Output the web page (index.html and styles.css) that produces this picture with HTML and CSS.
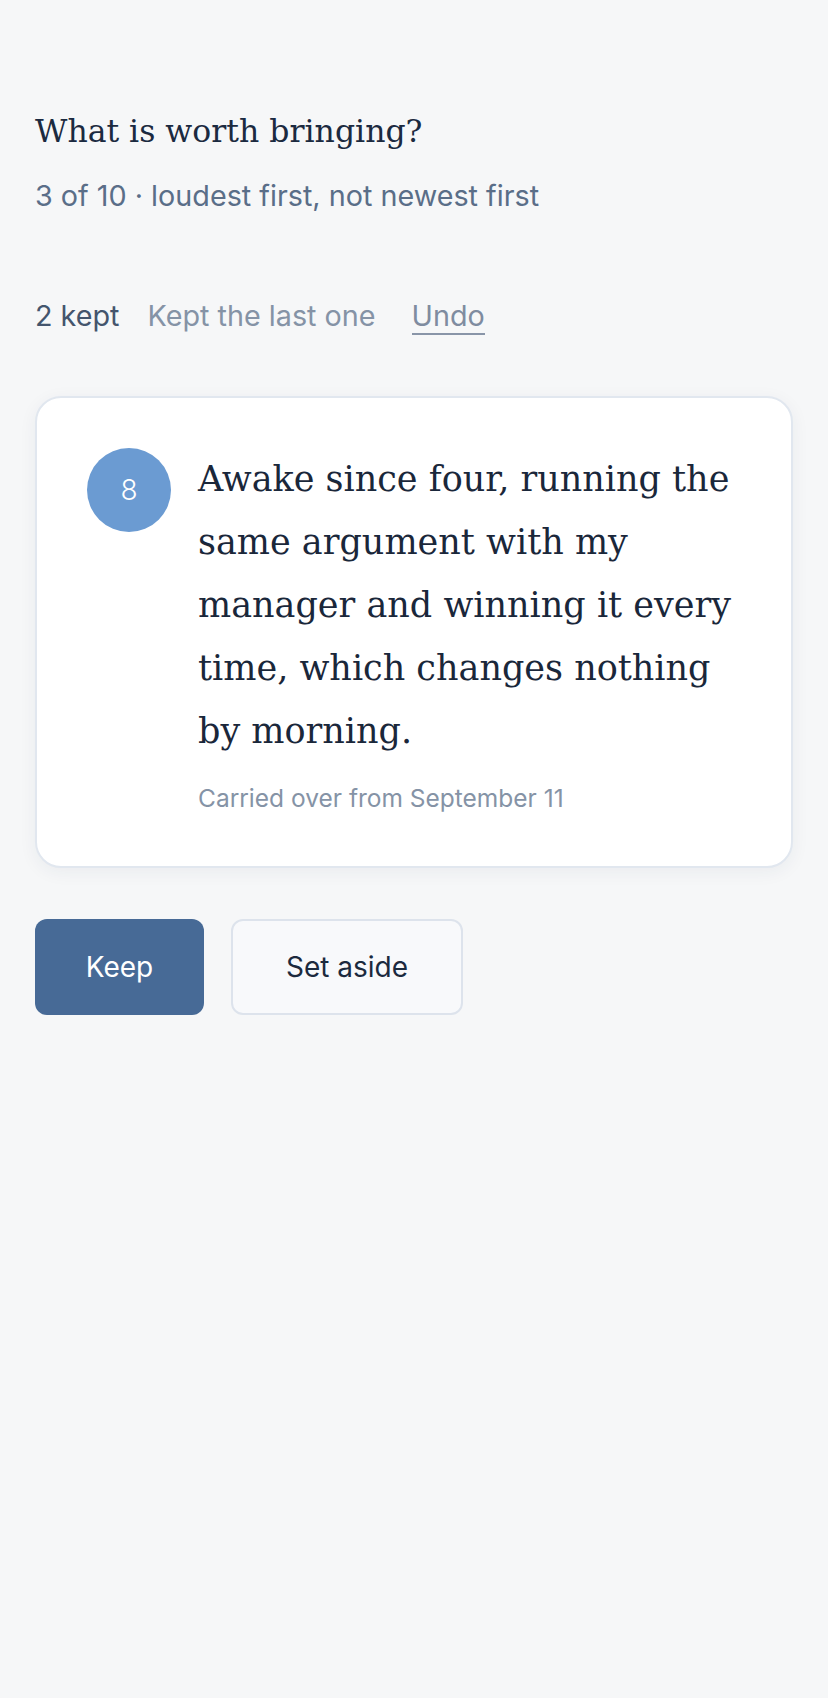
FILE: index.html
```html
<!DOCTYPE html>
<html lang="en">
<head>
<meta charset="utf-8">
<title>What is worth bringing?</title>
<link rel="stylesheet" href="styles.css">
</head>
<body>
<main class="page">
  <header class="intro">
    <h1 class="title">What is worth bringing?</h1>
    <p class="subtitle">3 of 10 · loudest first, not newest first</p>
  </header>

  <div class="status">
    <span class="status-count">2 kept</span>
    <span class="status-note">Kept the last one</span>
    <a class="status-undo" href="#">Undo</a>
  </div>

  <article class="card">
    <div class="badge">8</div>
    <div class="card-body">
      <p class="card-text">Awake since four, running the same argument with my manager and winning it every time, which changes nothing by morning.</p>
      <p class="card-meta">Carried over from September 11</p>
    </div>
  </article>

  <div class="actions">
    <button class="btn btn-primary" type="button">Keep</button>
    <button class="btn btn-secondary" type="button">Set aside</button>
  </div>
</main>
</body>
</html>
```

FILE: styles.css
```css
* { box-sizing: border-box; }

html, body {
  margin: 0;
  padding: 0;
}

body {
  background: #f6f7f8;
  min-height: 1698px;
  font-family: Inter, "Noto Sans", sans-serif;
  color: #1c2a3e;
}

.page {
  padding: 112px 35px 40px 35px;
}

.intro { margin: 0; }

.title {
  margin: 0;
  font-family: "DejaVu Serif", serif;
  font-weight: 400;
  font-size: 31.5px;
  line-height: 39px;
  color: #1b2a40;
}

.subtitle {
  margin: 27px 0 0 0;
  font-size: 28.75px;
  line-height: 35px;
  color: #5a6e88;
}

.status {
  margin-top: 85px;
  display: flex;
  align-items: flex-start;
  gap: 28px;
  font-size: 28.75px;
  line-height: 35px;
}

.status-count { color: #44556d; }

.status-note { color: #8593a6; }

.status-undo {
  margin-left: 8px;
  color: #7f8ca0;
  text-decoration: none;
  padding-bottom: 0;
  border-bottom: 2px solid #8995a8;
}

.card {
  margin-top: 61px;
  display: flex;
  align-items: flex-start;
  gap: 27px;
  padding: 50px 50px 53px 50px;
  background: #ffffff;
  border: 2px solid #e1e7ef;
  border-radius: 26px;
  box-shadow: 0 4px 18px rgba(30, 50, 80, 0.06);
}

.badge {
  flex: none;
  width: 84px;
  height: 84px;
  border-radius: 50%;
  background: #6b9bd2;
  color: #ffffff;
  display: flex;
  align-items: center;
  justify-content: center;
  font-size: 28px;
  font-weight: 300;
}

.card-body { flex: 1; min-width: 0; }

.card-text {
  margin: 0;
  font-family: "DejaVu Serif", serif;
  font-size: 35px;
  line-height: 63px;
  color: #1a273a;
}

.card-meta {
  margin: 20px 0 0 0;
  font-size: 24.5px;
  line-height: 30px;
  color: #8593a6;
}

.actions {
  margin-top: 51px;
  display: flex;
  gap: 27px;
}

.btn {
  height: 96px;
  border-radius: 12px;
  font-family: Inter, "Noto Sans", sans-serif;
  font-size: 28px;
  cursor: pointer;
}

.btn-primary {
  width: 169px;
  background: #476a96;
  border: none;
  color: #ffffff;
}

.btn-secondary {
  width: 232px;
  background: #f8f9fb;
  border: 2px solid #dde3ec;
  color: #1c2a3e;
}
```
